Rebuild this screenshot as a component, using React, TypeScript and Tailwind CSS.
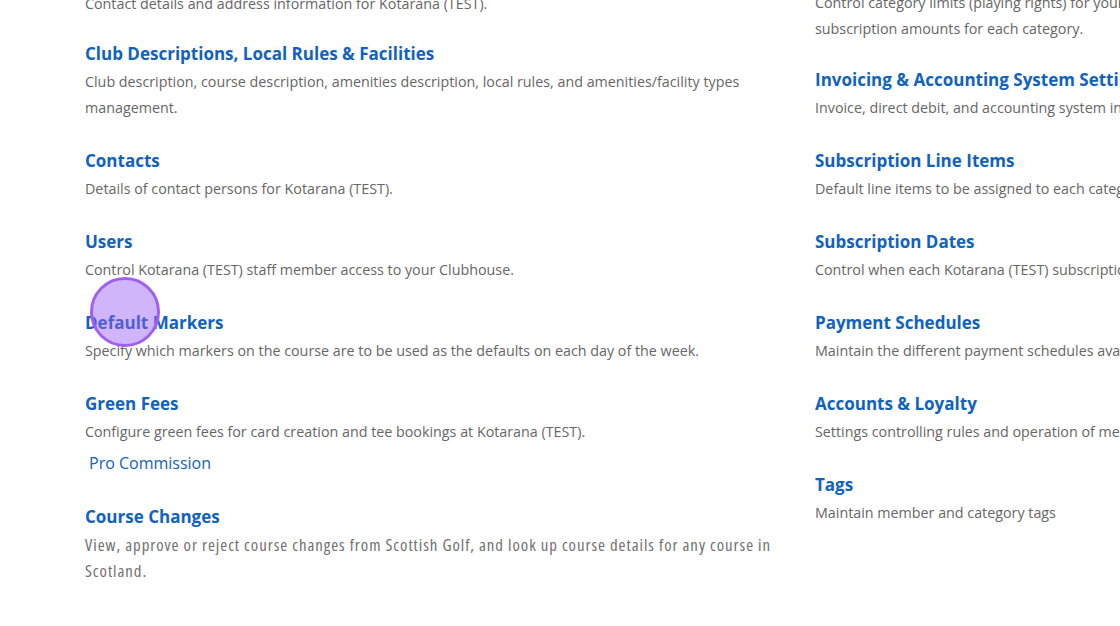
const left = [
  { title: 'Club Descriptions, Local Rules & Facilities', desc: 'Club description, course description, amenities description, local rules, and amenities/facility types management.', gap: 'mt-[25px]' },
  { title: 'Contacts', desc: 'Details of contact persons for Kotarana (TEST).', gap: 'mt-7' },
  { title: 'Users', desc: 'Control Kotarana (TEST) staff member access to your Clubhouse.', gap: 'mt-7' },
  { title: 'Default Markers', desc: 'Specify which markers on the course are to be used as the defaults on each day of the week.', gap: 'mt-7' },
]

const right = [
  { title: 'Invoicing & Accounting System Settings', desc: 'Invoice, direct debit, and accounting system integration settings.', gap: 'mt-[26px]' },
  { title: 'Subscription Line Items', desc: 'Default line items to be assigned to each category subscription.', gap: 'mt-7' },
  { title: 'Subscription Dates', desc: 'Control when each Kotarana (TEST) subscription year starts and ends.', gap: 'mt-7' },
  { title: 'Payment Schedules', desc: 'Maintain the different payment schedules available to members.', gap: 'mt-7' },
  { title: 'Accounts & Loyalty', desc: 'Settings controlling rules and operation of member accounts and loyalty.', gap: 'mt-7' },
  { title: 'Tags', desc: 'Maintain member and category tags', gap: 'mt-7' },
]

function Item({ title, desc, gap }: { title: string; desc: string; gap: string }) {
  return (
    <div className={gap}>
      <a href="#" className="block text-[17px] leading-6 font-bold text-[#1062c1] whitespace-nowrap">{title}</a>
      <p className="mt-[3px] text-[14.3px] leading-[26px] text-[#666666] whitespace-nowrap">{desc}</p>
    </div>
  )
}

export default function App() {
  return (
    <div className="relative h-[626px] w-[1120px] overflow-hidden bg-white font-['Open_Sans',sans-serif]">
      <div className="flex gap-[30px] pl-[85px] -mt-[12px]">
        <div className="w-[700px] shrink-0">
          <p className="mt-[3px] text-[14.3px] leading-[26px] text-[#666666]">Contact details and address information for Kotarana (TEST).</p>
          {left.slice(0, 1).map(item => (
            <div key={item.title} className={item.gap}>
              <a href="#" className="block text-[17px] leading-6 font-bold text-[#1062c1]">{item.title}</a>
              <p className="mt-[3px] text-[14.3px] leading-[26px] text-[#666666]">{item.desc}</p>
            </div>
          ))}
          {left.slice(1).map(item => <Item key={item.title} {...item} />)}
          <div className="mt-7">
            <a href="#" className="block text-[17px] leading-6 font-bold text-[#1062c1]">Green Fees</a>
            <p className="mt-[3px] text-[14.3px] leading-[26px] text-[#666666]">Configure green fees for card creation and tee bookings at Kotarana (TEST).</p>
            <a href="#" className="mt-[6px] block pl-1 text-[16px] leading-6 text-[#1062c1]">Pro Commission</a>
          </div>
          <div className="mt-[30px]">
            <a href="#" className="block text-[17px] leading-6 font-bold text-[#1062c1]">Course Changes</a>
            <p className="mt-[3px] text-[16.8px] leading-[26px] tracking-[0.95px] text-[#707070] font-stretch-condensed">View, approve or reject course changes from Scottish Golf, and look up course details for any course in Scotland.</p>
          </div>
        </div>
        <div className="w-[700px] shrink-0">
          <p className="mt-[2px] text-[14.3px] leading-[26px] text-[#666666] whitespace-nowrap">
            Control category limits (playing rights) for your Kotarana (TEST) members, and set the default
            <br />
            subscription amounts for each category.
          </p>
          {right.map(item => <Item key={item.title} {...item} />)}
        </div>
      </div>
      <div className="absolute left-[90px] top-[277px] h-[70px] w-[70px] rounded-full border-[3px] border-[#a15ff2] bg-[#9a5cf5]/45" />
    </div>
  )
}
